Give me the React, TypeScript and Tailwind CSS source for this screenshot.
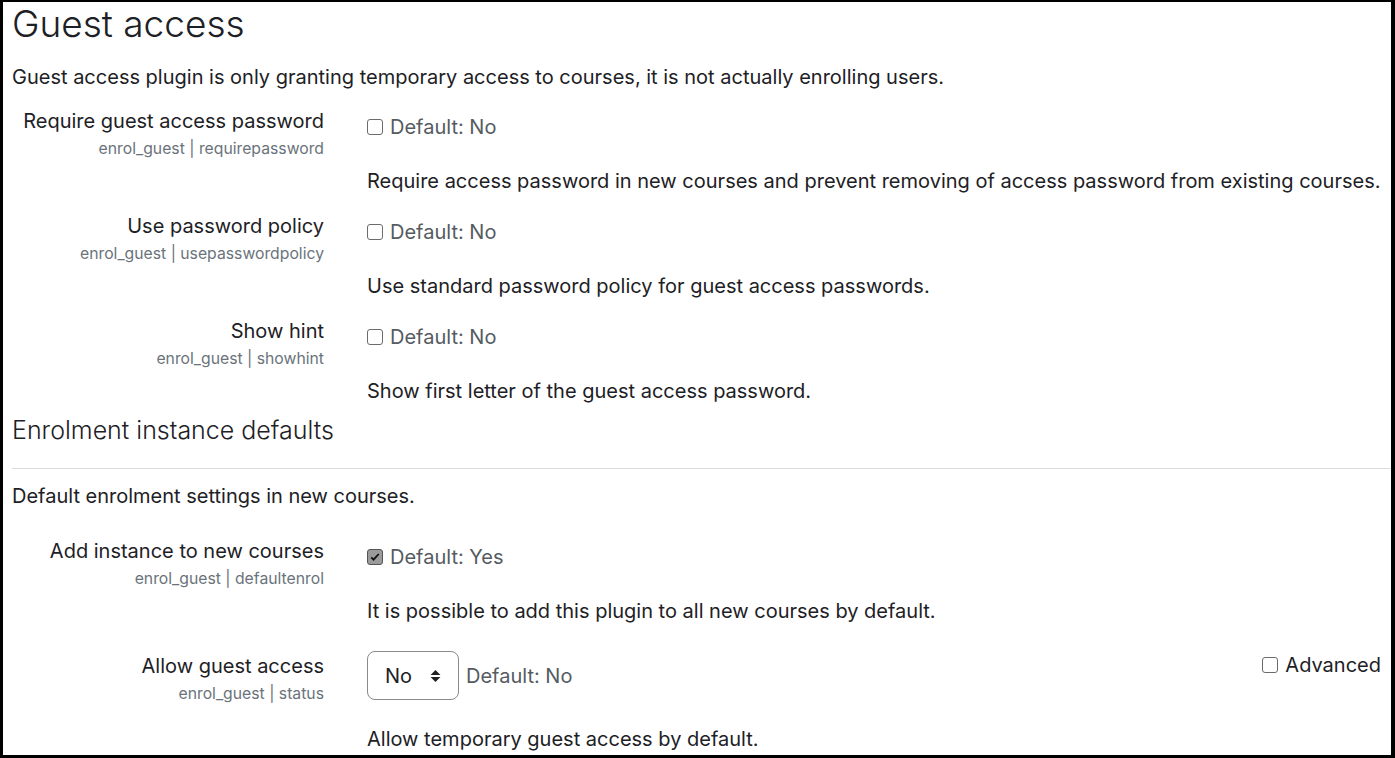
import React from 'react';

const font = { fontFamily: 'Inter, "Liberation Sans", sans-serif' };

type Setting = {
  label: string;
  name: string;
  checked?: boolean;
  desc: string;
};

const Box: React.FC<{ checked?: boolean }> = ({ checked }) =>
  checked ? (
    <span className="inline-flex h-4 w-4 items-center justify-center rounded-[3px] border border-[#555] bg-[#9b9b9b]">
      <svg viewBox="0 0 16 16" className="h-3 w-3">
        <path d="M3 8.5l3 3 7-7.5" fill="none" stroke="#111" strokeWidth="2.4" />
      </svg>
    </span>
  ) : (
    <span className="inline-block h-4 w-4 rounded-[3px] border border-[#6b6b6b] bg-white" />
  );

const Row: React.FC<{ s: Setting; className?: string }> = ({ s, className }) => (
  <div className={`flex ${className ?? ''}`}>
    <div className="w-[312px] shrink-0 text-right">
      <div className="text-[20px] leading-[26px] text-[#1d2125]">{s.label}</div>
      <div className="mt-[5px] text-[15.75px] leading-[20px] text-[#6a737b]">{s.name}</div>
    </div>
    <div className="ml-[43px] flex-1">
      <div className="mt-[6px] flex h-[26px] items-center gap-[7px]">
        <Box checked={s.checked} />
        <span className="text-[20px] text-[#555b61]">Default: {s.checked ? 'Yes' : 'No'}</span>
      </div>
      <div className="mt-[28px] text-[20px] leading-[26px] text-[#1d2125]">{s.desc}</div>
    </div>
  </div>
);

const top: Setting[] = [
  {
    label: 'Require guest access password',
    name: 'enrol_guest | requirepassword',
    desc: 'Require access password in new courses and prevent removing of access password from existing courses.',
  },
  {
    label: 'Use password policy',
    name: 'enrol_guest | usepasswordpolicy',
    desc: 'Use standard password policy for guest access passwords.',
  },
  {
    label: 'Show hint',
    name: 'enrol_guest | showhint',
    desc: 'Show first letter of the guest access password.',
  },
];

export default function App() {
  return (
    <div
      style={font}
      className="h-[758px] w-[1395px] overflow-hidden border-b-[3px] border-l-[3px] border-r-[4px] border-t-2 border-black bg-white pl-[9px]"
    >
      <h2 className="text-[37px] font-light leading-[44px] text-[#1d2125]">Guest access</h2>
      <p className="mt-[18px] text-[20px] leading-[26px] text-[#1d2125]">
        Guest access plugin is only granting temporary access to courses, it is not actually enrolling users.
      </p>

      <div className="mt-[18px] flex flex-col gap-[19px]">
        {top.map(s => (
          <Row key={s.name} s={s} />
        ))}
      </div>

      <h3 className="mt-[11px] text-[25px] font-light leading-[30px] text-[#1d2125]">Enrolment instance defaults</h3>
      <hr className="mt-[23px] border-t border-[#dcdcdc]" />
      <p className="mt-[14px] text-[20px] leading-[26px] text-[#1d2125]">Default enrolment settings in new courses.</p>

      <Row
        className="mt-[29px]"
        s={{
          label: 'Add instance to new courses',
          name: 'enrol_guest | defaultenrol',
          checked: true,
          desc: 'It is possible to add this plugin to all new courses by default.',
        }}
      />

      <div className="mt-[29px] flex">
        <div className="w-[312px] shrink-0 text-right">
          <div className="text-[20px] leading-[26px] text-[#1d2125]">Allow guest access</div>
          <div className="mt-[5px] text-[15.75px] leading-[20px] text-[#6a737b]">enrol_guest | status</div>
        </div>
        <div className="ml-[43px] flex-1">
          <div className="-mt-[2px] flex items-start justify-between pr-[10px]">
            <div className="flex items-center gap-[7px]">
              <div className="flex h-[49px] w-[92px] items-center justify-between rounded-[8px] border border-[#8a8a8a] pl-[17px] pr-[17px]">
                <span className="text-[20px] text-[#1d2125]">No</span>
                <svg viewBox="0 0 10 14" className="h-[16px] w-[11px]">
                  <path d="M5 1.5L9.5 6H0.5z M5 12.5L9.5 8H0.5z" fill="#222" />
                </svg>
              </div>
              <span className="text-[20px] text-[#555b61]">Default: No</span>
            </div>
            <div className="mt-[1px] flex h-[26px] items-center gap-[7px]">
              <Box />
              <span className="text-[20px] text-[#1d2125]">Advanced</span>
            </div>
          </div>
          <div className="mt-[26px] text-[20px] leading-[26px] text-[#1d2125]">Allow temporary guest access by default.</div>
        </div>
      </div>
    </div>
  );
}
